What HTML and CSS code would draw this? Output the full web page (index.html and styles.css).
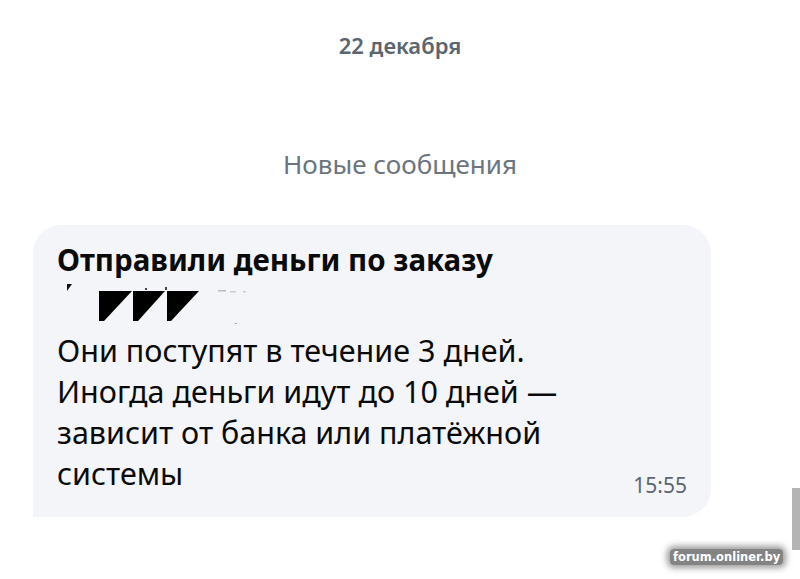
FILE: index.html
```html
<!DOCTYPE html>
<html lang="ru">
<head>
<meta charset="utf-8">
<link rel="stylesheet" href="styles.css">
</head>
<body>
<div class="chat">
  <div class="date">22 декабря</div>
  <div class="divider">Новые сообщения</div>
  <div class="bubble">
    <div class="title">Отправили деньги по заказу</div>
    <svg class="redact" width="200" height="42" viewBox="0 0 200 42">
      <polygon points="12,2 17,2 12,9" fill="#111"/>
      <polygon points="44,9 77,9 49,39 44,39" fill="#000"/>
      <polygon points="78,9 110,9 83,39 78,39" fill="#000"/>
      <polygon points="112,9 144,9 116,39 112,39" fill="#000"/>
      <rect x="90" y="6" width="2" height="2" fill="#444"/>
      <rect x="110" y="5" width="2" height="3" fill="#444"/>
      <rect x="163" y="8" width="8" height="1.5" fill="#bbb"/>
      <rect x="175" y="9" width="6" height="1.5" fill="#ccc"/>
      <rect x="188" y="9" width="3" height="1.5" fill="#ccc"/>
      <rect x="180" y="41" width="1.5" height="1.5" fill="#888"/>
    </svg>
    <div class="text">Они поступят в течение 3 дней.<br>Иногда деньги идут до 10 дней —<br>зависит от банка или платёжной<br>системы</div>
    <div class="time">15:55</div>
  </div>
</div>
<div class="scrollbar"></div>
<div class="watermark">forum.onliner.by</div>
</body>
</html>
```
FILE: styles.css
```css
html, body {
  margin: 0;
  padding: 0;
  background: #ffffff;
}
body {
  width: 800px;
  height: 579px;
  overflow: hidden;
  position: relative;
  font-family: "Noto Sans", "DejaVu Sans", sans-serif;
}
.chat {
  display: flex;
  flex-direction: column;
}
.date {
  margin-top: 31px;
  text-align: center;
  font-size: 22px;
  font-weight: 600;
  color: #5b6570;
  line-height: 28px;
}
.divider {
  margin-top: 88px;
  text-align: center;
  font-size: 26px;
  color: #6b7480;
  line-height: 34px;
}
.bubble {
  margin-top: 44px;
  margin-left: 33px;
  width: 678px;
  height: 292px;
  box-sizing: border-box;
  background: #f4f5f9;
  border-radius: 28px 28px 28px 0;
  padding: 15px 24px 0 24px;
  display: flex;
  flex-direction: column;
  position: relative;
}
.title {
  font-size: 29.5px;
  font-weight: 700;
  color: #0a0a0a;
  line-height: 40px;
}
.redact {
  display: block;
  margin-left: -2px;
  margin-top: 2px;
}
.text {
  font-size: 30.5px;
  color: #0a0a0a;
  line-height: 41px;
  margin-top: 6px;
}
.time {
  position: absolute;
  right: 24px;
  bottom: 18px;
  font-size: 21px;
  color: #5d6570;
}
.scrollbar {
  position: absolute;
  right: 0;
  top: 488px;
  width: 8px;
  height: 62px;
  background: #b4b4b4;
}
.watermark {
  position: absolute;
  left: 670px;
  top: 549px;
  font-family: "DejaVu Sans", sans-serif;
  font-size: 11.5px;
  font-weight: 700;
  color: #ffffff;
  padding: 1px 3px;
  background: rgba(90, 90, 90, 0.75);
  box-shadow: 0 0 6px 3px rgba(90, 90, 90, 0.6);
  border-radius: 4px;
}
```
